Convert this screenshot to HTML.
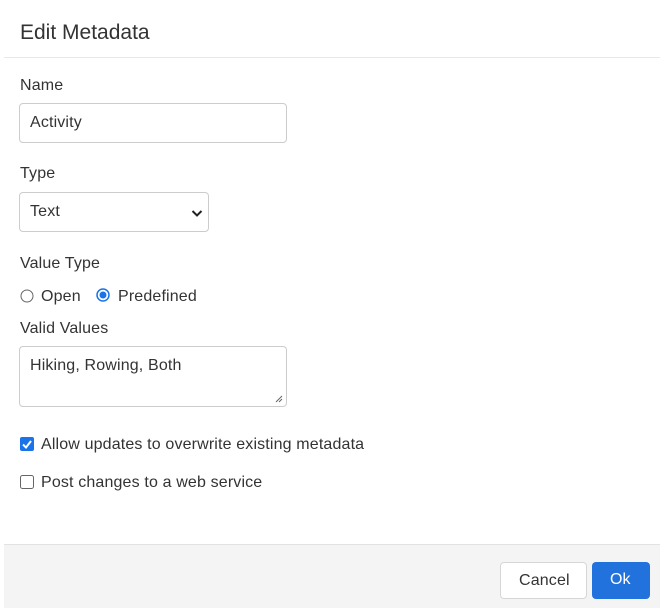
<!DOCTYPE html>
<html><head><style>
body{margin:0;width:660px;height:607px;background:#fff;font-family:"Liberation Sans",sans-serif;color:#333;position:relative;overflow:hidden}
.a{position:absolute}
.t{font-size:16px;letter-spacing:0.15px;color:#333}
.box{position:absolute;border:1px solid #ccc;border-radius:4px;background:#fff;box-sizing:border-box}
</style></head><body>
<div class="a" style="left:20px;top:21px;font-size:21px;color:#333">Edit Metadata</div>
<div class="a" style="left:4px;top:57px;width:656px;height:1px;background:#e8e8e8"></div>
<div class="a t" style="left:20px;top:77px">Name</div>
<div class="box" style="left:19px;top:103px;width:268px;height:40px"><span class="a t" style="left:10px;top:10px">Activity</span></div>
<div class="a t" style="left:20px;top:165px">Type</div>
<div class="box" style="left:19px;top:192px;width:190px;height:40px"><span class="a t" style="left:10px;top:10px">Text</span>
<svg class="a" style="left:171px;top:16px" width="12" height="9" viewBox="0 0 12 9"><path d="M1.5 2 L6 6.5 L10.5 2" stroke="#222" stroke-width="2" fill="none"/></svg></div>
<div class="a t" style="left:20px;top:255px">Value Type</div>
<svg class="a" style="left:20px;top:289px" width="14" height="14"><circle cx="7" cy="7" r="6" fill="#fff" stroke="#666" stroke-width="1"/></svg>
<div class="a t" style="left:41px;top:288px">Open</div>
<svg class="a" style="left:96px;top:288px" width="14" height="14"><circle cx="7" cy="7" r="6" fill="#fff" stroke="#1a73e8" stroke-width="1.5"/><circle cx="7" cy="7" r="3.5" fill="#1a73e8"/></svg>
<div class="a t" style="left:118px;top:288px">Predefined</div>
<div class="a t" style="left:20px;top:320px">Valid Values</div>
<div class="box" style="left:19px;top:346px;width:268px;height:61px"><span class="a t" style="left:10px;top:10px">Hiking, Rowing, Both</span>
<svg class="a" style="left:255px;top:48px" width="8" height="8"><path d="M1 7L7 1M4 7L7 4" stroke="#666" stroke-width="1"/></svg></div>
<svg class="a" style="left:20px;top:437px" width="14" height="14"><rect x="0" y="0" width="14" height="14" rx="2" fill="#1a73e8"/><path d="M3 7.5L6 10.5L11 4" stroke="#fff" stroke-width="2" fill="none"/></svg>
<div class="a t" style="left:41px;top:436px">Allow updates to overwrite existing metadata</div>
<svg class="a" style="left:20px;top:475px" width="14" height="14"><rect x="0.5" y="0.5" width="13" height="13" rx="2" fill="#fff" stroke="#666"/></svg>
<div class="a t" style="left:41px;top:474px">Post changes to a web service</div>
<div class="a" style="left:4px;top:544px;width:656px;height:63px;background:#f4f4f4;border-top:1px solid #e2e2e2"></div>
<div class="box" style="left:500px;top:562px;width:87px;height:37px;border-color:#d6d6d6"><span class="a t" style="left:18px;top:9px">Cancel</span></div>
<div class="a" style="left:592px;top:562px;width:58px;height:37px;background:#2272dd;border-radius:4px"><span class="a" style="left:18px;top:9px;font-size:16px;color:#fff">Ok</span></div>
</body></html>
